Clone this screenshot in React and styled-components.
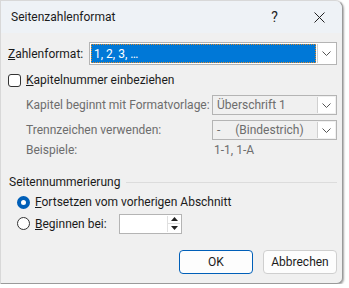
import React from 'react';
import styled, { createGlobalStyle } from 'styled-components';

const GlobalStyle = createGlobalStyle`
  html, body {
    margin: 0;
    padding: 0;
    background: #ffffff;
  }
  body {
    font-family: Roboto, "Noto Sans", sans-serif;
    font-size: 12px;
    color: #1b1b1b;
  }
`;

const Window = styled.div`
  width: 343px;
  height: 284px;
  box-sizing: border-box;
  background: #f0f0f0;
  border: 1px solid #9a9a9a;
  border-top-color: #d8d8d8;
  border-left-color: #d8d8d8;
  border-radius: 0 8px 6px 0;
  box-shadow: 1px 1px 2px rgba(0, 0, 0, 0.35);
  display: flex;
  flex-direction: column;
  overflow: hidden;
`;

const TitleBar = styled.div`
  height: 32px;
  background: #eef2f6;
  display: flex;
  align-items: center;
  padding-left: 10px;
  font-size: 12px;
`;

const Title = styled.div`
  flex: 1;
`;

const TitleButton = styled.div`
  width: 45px;
  height: 32px;
  display: flex;
  align-items: center;
  justify-content: center;
  font-size: 14px;
  color: #222;
`;

const Body = styled.div`
  flex: 1;
  padding: 9px 5px 0 7px;
  display: flex;
  flex-direction: column;
`;

const Row = styled.div`
  display: flex;
  align-items: center;
  height: ${p => p.$h || 22}px;
  margin-top: ${p => p.$mt || 0}px;
  padding-left: ${p => p.$pl || 0}px;
`;

const Label = styled.span`
  width: ${p => (p.$w ? `${p.$w}px` : 'auto')};
  flex-shrink: 0;
  color: ${p => (p.$dim ? '#6d6d6d' : '#1b1b1b')};
  white-space: nowrap;
  u { text-decoration: underline; text-underline-offset: 1px; }
`;

const Select = styled.div`
  width: ${p => p.$w}px;
  height: ${p => p.$h || 20}px;
  box-sizing: border-box;
  border: 1px solid #b4b4b4;
  background: ${p => (p.$disabled ? '#f0f0f0' : '#ffffff')};
  display: flex;
  align-items: stretch;
  padding: 1px;
`;

const SelectValue = styled.div`
  flex: 1;
  display: flex;
  align-items: center;
  padding-left: 3px;
  white-space: pre;
  color: ${p => (p.$selected ? '#ffffff' : p.$dim ? '#6d6d6d' : '#1b1b1b')};
  background: ${p => (p.$selected ? '#0078d7' : 'transparent')};
  outline: ${p => (p.$selected ? '1px dotted #e08a2a' : 'none')};
  outline-offset: -1px;
`;

const DropButton = styled.div`
  width: 17px;
  margin-left: 1px;
  background: #ffffff;
  border-left: 1px solid #d0d0d0;
  display: flex;
  align-items: center;
  justify-content: center;
`;

const Checkbox = styled.span`
  width: 13px;
  height: 13px;
  box-sizing: border-box;
  border: 1px solid #333;
  border-radius: 3px;
  background: #fff;
  margin-right: 5px;
`;

const Radio = styled.span`
  width: 13px;
  height: 13px;
  box-sizing: border-box;
  border-radius: 50%;
  border: ${p => (p.$checked ? '4px solid #005fb8' : '1px solid #333')};
  background: #fff;
  margin-right: 5px;
`;

const GroupHeader = styled.div`
  display: flex;
  align-items: center;
  gap: 6px;
  height: 18px;
  margin-top: 13px;
  padding-left: 1px;
  &::after {
    content: '';
    flex: 1;
    height: 1px;
    background: #dcdcdc;
  }
`;

const Spin = styled.div`
  width: 63px;
  height: 20px;
  box-sizing: border-box;
  border: 1px solid #b4b4b4;
  background: #fff;
  display: flex;
  justify-content: flex-end;
  padding: 1px;
`;

const SpinArrows = styled.div`
  width: 12px;
  display: flex;
  flex-direction: column;
  border-left: 1px solid #e0e0e0;
  div {
    flex: 1;
    display: flex;
    align-items: center;
    justify-content: center;
  }
  div + div { border-top: 1px solid #e0e0e0; }
`;

const Buttons = styled.div`
  margin-top: auto;
  margin-bottom: 9px;
  display: flex;
  justify-content: flex-end;
  gap: 10px;
`;

const Button = styled.button`
  width: 74px;
  height: 24px;
  box-sizing: border-box;
  font: inherit;
  font-size: 12px;
  color: #1b1b1b;
  background: #fdfdfd;
  border: 1px solid ${p => (p.$primary ? '#005fb8' : '#cfcfcf')};
  border-radius: 4px;
  padding: 0;
`;

const Chevron = () => (
  <svg width="9" height="5" viewBox="0 0 9 5">
    <path d="M0.5 0.5 L4.5 4.5 L8.5 0.5" fill="none" stroke="#555" strokeWidth="1" />
  </svg>
);

const Tri = ({ up }) => (
  <svg width="7" height="4" viewBox="0 0 7 4">
    <path d={up ? 'M0 4 L3.5 0 L7 4 Z' : 'M0 0 L3.5 4 L7 0 Z'} fill="#222" />
  </svg>
);

const App = () => (
  <>
    <GlobalStyle />
    <Window>
      <TitleBar>
        <Title>Seitenzahlenformat</Title>
        <TitleButton>?</TitleButton>
        <TitleButton>
          <svg width="11" height="11" viewBox="0 0 11 11">
            <path d="M0.5 0.5 L10.5 10.5 M10.5 0.5 L0.5 10.5" stroke="#222" strokeWidth="1" />
          </svg>
        </TitleButton>
      </TitleBar>
      <Body>
        <Row $h={23}>
          <Label $w={81}><u>Z</u>ahlenformat:</Label>
          <Select $w={250} $h={23}>
            <SelectValue $selected>1, 2, 3, …</SelectValue>
            <DropButton><Chevron /></DropButton>
          </Select>
        </Row>
        <Row $mt={5} $h={20}>
          <Checkbox />
          <Label><u>K</u>apitelnummer einbeziehen</Label>
        </Row>
        <Row $mt={5} $h={20} $pl={18}>
          <Label $w={186} $dim>Kapitel beginnt mit Formatvorlage:</Label>
          <Select $w={127} $disabled>
            <SelectValue $dim>Überschrift 1</SelectValue>
            <DropButton><Chevron /></DropButton>
          </Select>
        </Row>
        <Row $mt={5} $h={20} $pl={18}>
          <Label $w={186} $dim>Trennzeichen verwenden:</Label>
          <Select $w={127} $disabled>
            <SelectValue $dim>{'-     (Bindestrich)'}</SelectValue>
            <DropButton><Chevron /></DropButton>
          </Select>
        </Row>
        <Row $mt={0} $h={20} $pl={18}>
          <Label $w={188} $dim>Beispiele:</Label>
          <Label $dim>1-1, 1-A</Label>
        </Row>
        <GroupHeader>Seitennummerierung</GroupHeader>
        <Row $mt={1} $h={20} $pl={9}>
          <Radio $checked />
          <Label><u>F</u>ortsetzen vom vorherigen Abschnitt</Label>
        </Row>
        <Row $mt={1} $h={21} $pl={9}>
          <Radio />
          <Label $w={84}><u>B</u>eginnen bei:</Label>
          <Spin>
            <SpinArrows>
              <div><Tri up /></div>
              <div><Tri /></div>
            </SpinArrows>
          </Spin>
        </Row>
        <Buttons>
          <Button $primary>OK</Button>
          <Button>Abbrechen</Button>
        </Buttons>
      </Body>
    </Window>
  </>
);

export default App;
